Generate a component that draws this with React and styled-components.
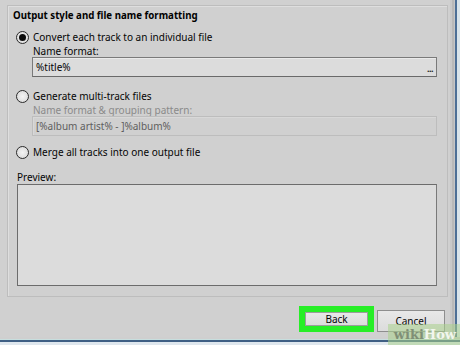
import React from 'react'
import styled, { createGlobalStyle } from 'styled-components'

const GlobalStyle = createGlobalStyle`
  html, body {
    margin: 0;
    padding: 0;
    background: #d0d0d0;
  }
  body {
    font-family: 'Noto Sans', 'DejaVu Sans', sans-serif;
    font-size: 10px;
    color: #050505;
  }
`

const Window = styled.div`
  position: relative;
  width: 460px;
  height: 345px;
  display: flex;
  flex-direction: column;
  background: #d0d0d0;
  overflow: hidden;
`

const Main = styled.div`
  display: flex;
  flex: 1;
`

const Content = styled.div`
  width: 450px;
  display: flex;
  flex-direction: column;
  padding: 5px 0 0 7px;
  box-sizing: border-box;
`

const RightFrame = styled.div`
  width: 10px;
  background: linear-gradient(to right, #c9c9c9 0 2px, #b9b9b9 2px 4px, #c6c6c6 4px 5px, #4d6f96 5px 7px, #d9e4ea 7px);
`

const GroupBox = styled.div`
  width: 441px;
  height: 292px;
  box-sizing: border-box;
  border: 1px solid #bdbdbd;
  box-shadow: inset 1px 1px 0 #dedede;
  display: flex;
  flex-direction: column;
  padding: 1px 0 0 5px;
`

const Title = styled.div`
  height: 18px;
  line-height: 18px;
  font-weight: 700;
  font-size: 9.7px;
  color: #000;
`

const RadioRow = styled.label`
  display: flex;
  align-items: center;
  gap: 4px;
  height: 16px;
  line-height: 16px;
  margin-top: ${(p) => p.$top}px;
  padding-left: 3px;
`

const RadioCircle = styled.span`
  width: 13px;
  height: 13px;
  box-sizing: border-box;
  border-radius: 50%;
  border: 1px solid #2b2b2b;
  background: radial-gradient(circle, #f4f4f4 0%, #d6d6d6 100%);
  display: flex;
  align-items: center;
  justify-content: center;

  &::after {
    content: '';
    width: 7px;
    height: 7px;
    border-radius: 50%;
    background: ${(p) => (p.$checked ? '#0c0c0c' : 'transparent')};
  }
`

const FieldLabel = styled.div`
  height: 12px;
  line-height: 12px;
  padding-left: ${(p) => p.$indent}px;
  color: ${(p) => (p.$disabled ? '#8a8a8a' : '#050505')};
`

const TextField = styled.div`
  margin-left: 19px;
  width: 405px;
  height: 20px;
  box-sizing: border-box;
  display: flex;
  align-items: center;
  justify-content: space-between;
  padding: 0 3px 0 3px;
  line-height: 14px;
  border: 1px solid ${(p) => (p.$disabled ? '#bdbdbd' : '#7a7a7a')};
  border-bottom-color: ${(p) => (p.$disabled ? '#bdbdbd' : '#6a6a6a')};
  background: ${(p) => (p.$disabled ? '#d0d0d0' : '#dcdcdc')};
  box-shadow: ${(p) => (p.$disabled ? 'inset 1px 1px 0 #d8d8d8' : 'inset 0 1px 0 #eaeaea')};
  color: ${(p) => (p.$disabled ? '#5e5e5e' : '#050505')};
`

const Dots = styled.span`
  align-self: flex-end;
  margin-bottom: 3px;
  font-weight: 700;
  font-size: 9px;
  line-height: 9px;
  letter-spacing: -0.5px;
  color: #222;
`

const PreviewLabel = styled.div`
  height: 13px;
  line-height: 13px;
  margin-top: 11px;
  padding-left: 4px;
`

const PreviewBox = styled.div`
  margin-left: 4px;
  width: 420px;
  height: 102px;
  box-sizing: border-box;
  border: 1px solid #6c6c6c;
  border-right-color: #7a7a7a;
  background: #dcdcdc;
`

const ButtonBar = styled.div`
  display: flex;
  justify-content: flex-end;
  align-items: flex-start;
  gap: 3px;
  padding: 9px 5px 0 0;
  height: 38px;
  box-sizing: border-box;
`

const Highlight = styled.div`
  width: 75px;
  height: 26px;
  box-sizing: border-box;
  border: 6px solid #27ee27;
  background: #27ee27;
`

const Button = styled.button`
  width: ${(p) => p.$width}px;
  height: ${(p) => p.$height}px;
  margin-top: ${(p) => p.$top || 0}px;
  box-sizing: border-box;
  border: 1px solid ${(p) => p.$border};
  background: linear-gradient(#e8e8e8, #dcdcdc);
  font-family: 'Noto Sans', 'DejaVu Sans', sans-serif;
  font-size: 10px;
  line-height: 11px;
  color: #050505;
  padding: 0;
  display: flex;
  align-items: center;
  justify-content: center;
`

const BottomEdge = styled.div`
  height: 8px;
  background: linear-gradient(#cfcfcf 0 2px, #c7dede 2px 3px, #3f5f84 3px 5px, #dfe7ee 5px);
`

const Watermark = styled.div`
  position: absolute;
  right: 0;
  bottom: 0;
  width: 72px;
  height: 21px;
  padding-right: 4px;
  box-sizing: border-box;
  background: rgba(170, 210, 140, 0.55);
  display: flex;
  align-items: center;
  justify-content: flex-end;
  font-family: 'DejaVu Serif', 'Liberation Serif', serif;
  font-weight: 700;
  font-size: 13px;
  line-height: 14px;
`

const Wiki = styled.span`
  color: #7f8f76;
`

const How = styled.span`
  color: #f2f6ee;
`

const Radio = ({ checked, top, children }) => (
  <RadioRow $top={top}>
    <RadioCircle $checked={checked} />
    <span>{children}</span>
  </RadioRow>
)

const App = () => {
  return (
    <Window>
      <GlobalStyle />
      <Main>
        <Content>
          <GroupBox>
            <Title>Output style and file name formatting</Title>
            <Radio checked top={4}>Convert each track to an individual file</Radio>
            <FieldLabel $indent={20}>Name format:</FieldLabel>
            <TextField>
              <span>%title%</span>
              <Dots>...</Dots>
            </TextField>
            <Radio top={11}>Generate multi-track files</Radio>
            <FieldLabel $indent={20} $disabled>Name format &amp; grouping pattern:</FieldLabel>
            <TextField $disabled>
              <span>[%album artist% - ]%album%</span>
            </TextField>
            <Radio top={8}>Merge all tracks into one output file</Radio>
            <PreviewLabel>Preview:</PreviewLabel>
            <PreviewBox />
          </GroupBox>
          <ButtonBar>
            <Highlight>
              <Button $width={63} $height={14} $border="#9c9c9c">Back</Button>
            </Highlight>
            <Button $width={68} $height={22} $top={4} $border="#8e8e8e">Cancel</Button>
          </ButtonBar>
        </Content>
        <RightFrame />
      </Main>
      <BottomEdge />
      <Watermark>
        <Wiki>wiki</Wiki>
        <How>How</How>
      </Watermark>
    </Window>
  )
}

export default App
